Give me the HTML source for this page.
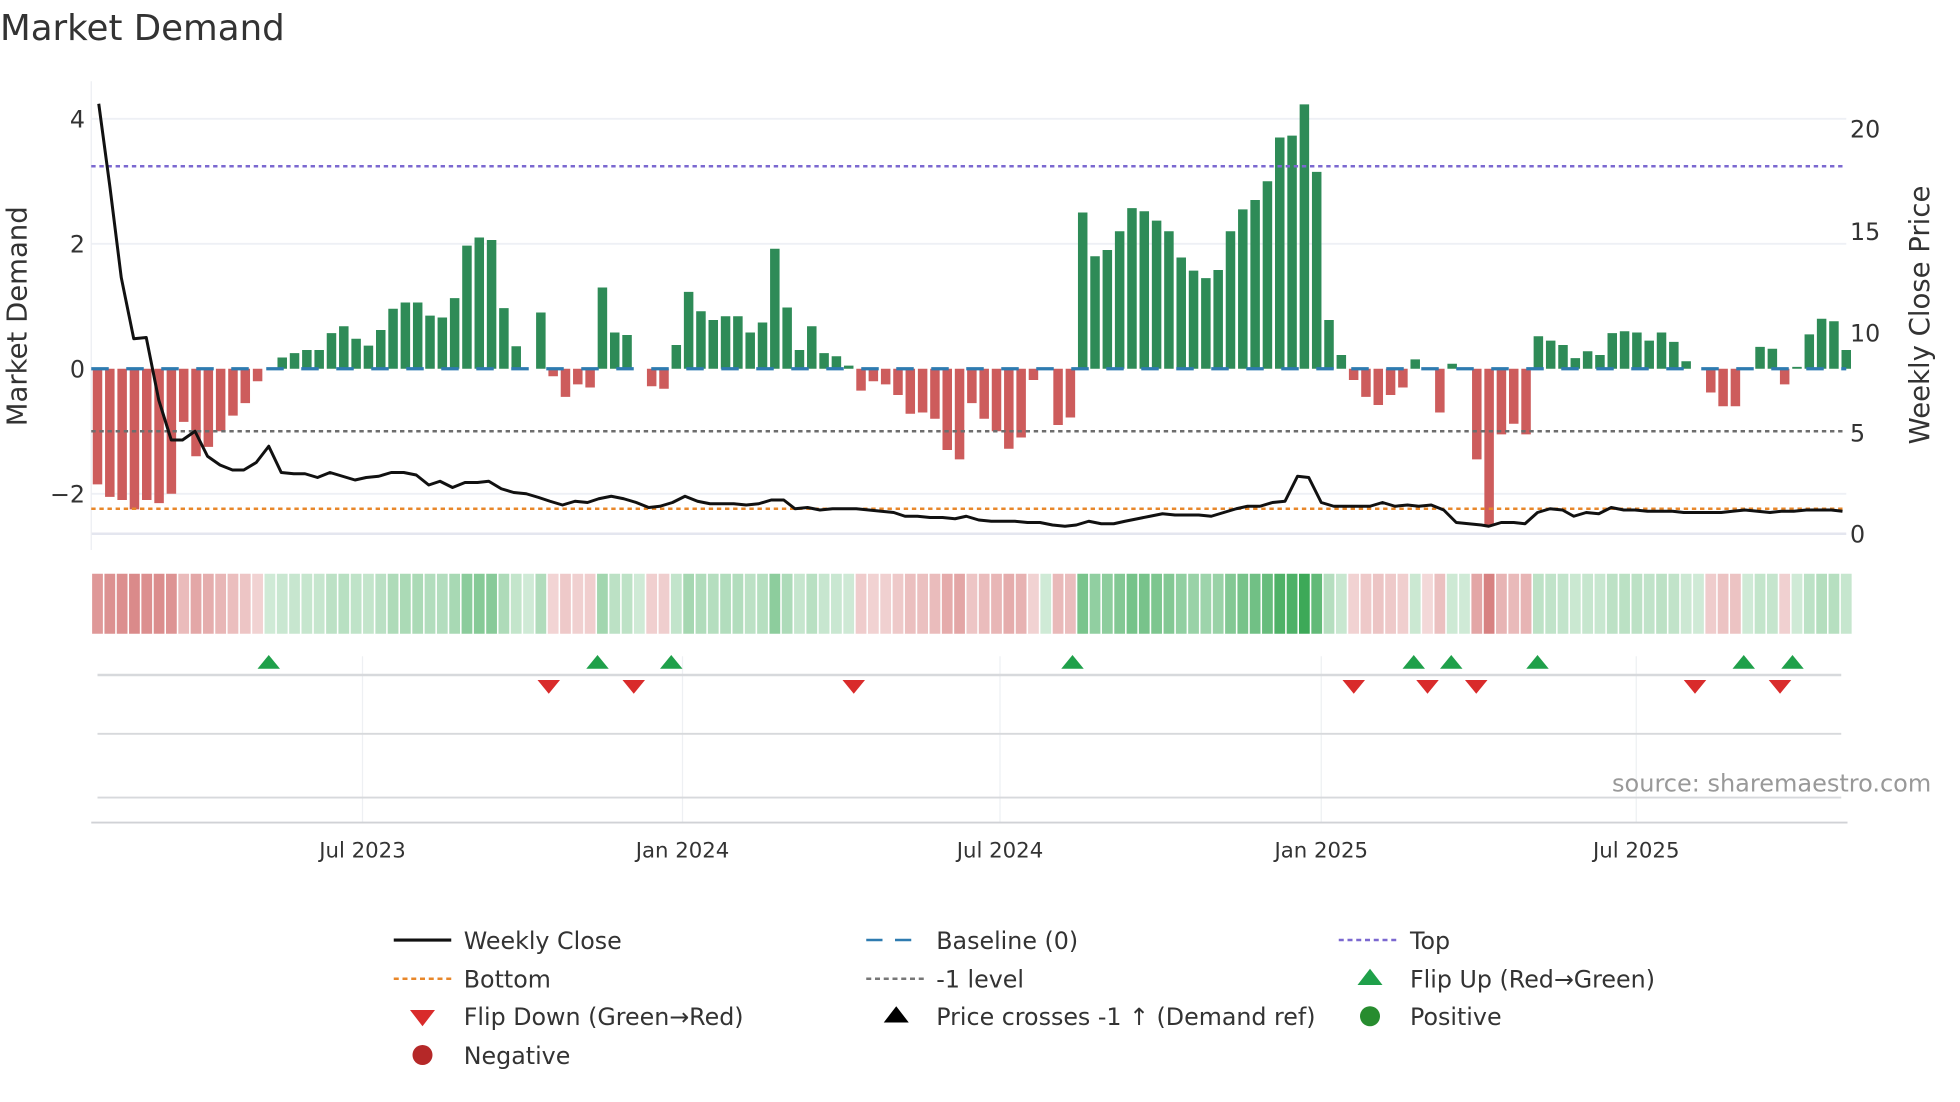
<!DOCTYPE html>
<html><head><meta charset="utf-8"><style>
html,body{margin:0;padding:0;background:#fff;width:1960px;height:1102px;overflow:hidden}
svg{display:block}
text{font-family:"DejaVu Sans","Liberation Sans",sans-serif;fill:#333}
</style></head><body>
<svg id="s" width="1960" height="1102" viewBox="0 0 1568 881.6" preserveAspectRatio="xMinYMin meet" xmlns="http://www.w3.org/2000/svg">
<text x="0" y="32" font-size="28.5">Market Demand</text>
<g stroke="#eef0f5" stroke-width="1.5">
<line x1="73" y1="95" x2="1477" y2="95"/><line x1="73" y1="195" x2="1477" y2="195"/>
<line x1="73" y1="395" x2="1477" y2="395"/><line x1="73" y1="427" x2="1477" y2="427" stroke="#e4e6ef" stroke-width="2"/>
</g>
<line x1="73" y1="65" x2="73" y2="440" stroke="#eceef2" stroke-width="1"/>
<g id="bars"></g>
<line x1="73" y1="295" x2="1477" y2="295" stroke="#2e7bb0" stroke-width="2.6" stroke-dasharray="14 14"/>
<line x1="73" y1="133" x2="1477" y2="133" stroke="#7b68d0" stroke-width="2" stroke-dasharray="3.5 3"/>
<line x1="73" y1="345" x2="1477" y2="345" stroke="#6d6d6d" stroke-width="2" stroke-dasharray="3.5 3"/>
<line x1="73" y1="407" x2="1477" y2="407" stroke="#e8872a" stroke-width="2" stroke-dasharray="3.5 3"/>
<polyline id="price" fill="none" stroke="#111" stroke-width="2.4" stroke-linejoin="round"/>
<g font-size="19" text-anchor="end">
<text x="68" y="102">4</text><text x="68" y="202">2</text><text x="68" y="302">0</text><text x="68" y="402">−2</text>
</g>
<g font-size="19">
<text x="1480" y="110">20</text><text x="1480" y="192">15</text><text x="1480" y="273">10</text><text x="1480" y="353">5</text><text x="1480" y="434">0</text>
</g>
<text transform="translate(21,253) rotate(-90)" font-size="22" text-anchor="middle">Market Demand</text>
<text transform="translate(1543,252) rotate(-90)" font-size="22" text-anchor="middle">Weekly Close Price</text>
<g id="strip"></g>
<g stroke="#eef0f3" stroke-width="1">
<line x1="290" y1="525" x2="290" y2="658"/><line x1="546" y1="525" x2="546" y2="658"/><line x1="800" y1="525" x2="800" y2="658"/><line x1="1057" y1="525" x2="1057" y2="658"/><line x1="1309" y1="525" x2="1309" y2="658"/>
</g>
<line x1="78" y1="540" x2="1473" y2="540" stroke="#d7d9dc" stroke-width="2"/>
<line x1="78" y1="587" x2="1473" y2="587" stroke="#d7d9dc" stroke-width="1.5"/>
<line x1="78" y1="638" x2="1473" y2="638" stroke="#d7d9dc" stroke-width="1.5"/>
<line x1="73" y1="658" x2="1478" y2="658" stroke="#d0d2d6" stroke-width="1.5"/>
<g id="marks"></g>
<g font-size="17" text-anchor="middle">
<text x="290" y="686">Jul 2023</text><text x="546" y="686">Jan 2024</text><text x="800" y="686">Jul 2024</text><text x="1057" y="686">Jan 2025</text><text x="1309" y="686">Jul 2025</text>
</g>
<text x="1545" y="633" font-size="19.2" text-anchor="end" style="fill:#999">source: sharemaestro.com</text>
<g font-size="19">
<line x1="315" y1="752" x2="361" y2="752" stroke="#111" stroke-width="2.5"/><text x="371" y="759">Weekly Close</text>
<line x1="693" y1="752" x2="739" y2="752" stroke="#2e7bb0" stroke-width="2" stroke-dasharray="13 10"/><text x="749" y="759">Baseline (0)</text>
<line x1="1071" y1="752" x2="1117" y2="752" stroke="#7b68d0" stroke-width="2" stroke-dasharray="4 3"/><text x="1128" y="759">Top</text>
<line x1="315" y1="783" x2="361" y2="783" stroke="#e8872a" stroke-width="2" stroke-dasharray="4 3"/><text x="371" y="790">Bottom</text>
<line x1="693" y1="783" x2="739" y2="783" stroke="#777" stroke-width="2" stroke-dasharray="4 3"/><text x="749" y="790">-1 level</text>
<polygon points="1096,775 1106,788 1086,788" fill="#1fa04a"/><text x="1128" y="790">Flip Up (Red→Green)</text>
<polygon points="328,808 348,808 338,821" fill="#d92b2b"/><text x="371" y="820">Flip Down (Green→Red)</text>
<polygon points="717,805 727,818 707,818" fill="#000"/><text x="749" y="820">Price crosses -1 ↑ (Demand ref)</text>
<circle cx="1096" cy="813" r="8" fill="#278c2f"/><text x="1128" y="820">Positive</text>
<circle cx="338" cy="844" r="8" fill="#b52828"/><text x="371" y="851">Negative</text>
</g>
</svg>
<script>
var NS="http://www.w3.org/2000/svg";
var v=[-1.85,-2.05,-2.1,-2.25,-2.1,-2.15,-2.0,-0.85,-1.4,-1.25,-1.0,-0.75,-0.55,-0.2,0.01,0.18,0.25,0.3,0.3,0.57,0.68,0.48,0.37,0.62,0.96,1.06,1.06,0.85,0.82,1.13,1.97,2.1,2.06,0.97,0.36,0.01,0.9,-0.12,-0.45,-0.25,-0.3,1.3,0.58,0.54,0.01,-0.28,-0.32,0.38,1.23,0.92,0.78,0.84,0.84,0.58,0.74,1.92,0.98,0.3,0.68,0.25,0.2,0.05,-0.35,-0.2,-0.25,-0.42,-0.72,-0.7,-0.8,-1.3,-1.45,-0.55,-0.8,-1.0,-1.28,-1.1,-0.18,0.01,-0.9,-0.78,
2.5,1.8,1.9,2.2,2.57,2.52,2.37,2.2,1.78,1.57,1.45,1.58,2.2,2.55,2.7,3.0,3.7,3.73,4.23,3.15,0.78,0.22,-0.18,-0.45,-0.58,-0.42,-0.3,0.15,-0.02,-0.7,0.08,0.02,-1.45,-2.5,-1.05,-0.88,-1.05,0.52,0.45,0.38,0.17,0.28,0.22,0.57,0.6,0.58,0.45,0.58,0.43,0.12,0.01,-0.38,-0.6,-0.6,0.01,0.35,0.32,-0.25,0.03,0.55,0.8,0.76,0.3];
var n=v.length,dx=(1477-78)/(n-1);
function el(t,a,p){var e=document.createElementNS(NS,t);for(var k in a)e.setAttribute(k,a[k]);p.appendChild(e);return e;}
var bars=document.getElementById('bars'),strip=document.getElementById('strip');
for(var i=0;i<n;i++){var x=78+dx*i,val=v[i],h=Math.abs(val)*50;
 if(h>0.6)el('rect',{x:x-3.8,y:val>0?295-h:295,width:7.6,height:h,fill:val>0?'#2e8b57':'#cd5c5c'},bars);
 var a,c;if(val<0){a=0.22+0.5*Math.min(-val/2.5,1);c='rgba(200,80,80,'+a+')';}else{a=0.22+0.68*Math.min(val/4.2,1);c='rgba(40,160,70,'+a+')';}
 el('rect',{x:x-4.3,y:459,width:8.6,height:48,fill:c},strip);}
var p=[79,83,88,150,97,222,107,271,117,270,127,320,137,352,146,352,156,345,166,365,176,372,186,376,195,376,205,370,215,357,225,378,235,379,244,379,254,382,264,378,274,381,284,384,293,382,303,381,313,378,323,378,333,380,343,388,352,385,362,390,372,386,382,386,391,385,401,391,411,394,421,395,431,398,440,401,450,404,460,401,470,402,479,399,489,397,499,399,509,402,519,406,528,405,538,402,548,397,558,401,568,403,577,403,587,403,597,404,607,403,617,400,627,400,636,407,646,406,656,408,666,407,675,407,685,407,695,408,705,409,715,410,724,413,734,413,744,414,754,414,764,415,773,413,783,416,793,417,803,417,812,417,822,418,832,418,842,420,852,421,861,420,871,417,881,419,891,419,900,417,910,415,920,413,930,411,940,412,949,412,959,412,969,413,979,410,989,407,998,405,1008,405,1018,402,1028,401,1038,381,1047,382,1057,402,1067,405,1077,405,1087,405,1096,405,1106,402,1116,405,1126,404,1135,405,1145,404,1155,408,1165,418,1175,419,1185,420,1191,421,1201,418,1211,418,1220,419,1230,410,1240,407,1250,408,1259,413,1269,410,1279,411,1289,406,1299,408,1308,408,1318,409,1328,409,1338,409,1347,410,1357,410,1367,410,1377,410,1386,409,1396,408,1406,409,1416,410,1425,409,1435,409,1445,408,1455,408,1465,408,1474,409];
var s='';for(var j=0;j<p.length;j+=2)s+=p[j]+','+p[j+1]+' ';document.getElementById('price').setAttribute('points',s);
var m=document.getElementById('marks');
[215,478,537,858,1131,1161,1230,1395,1434].forEach(function(x){el('polygon',{points:(x)+',524 '+(x+9)+',535 '+(x-9)+',535',fill:'#1fa04a'},m);});
[439,507,683,1083,1142,1181,1356,1424].forEach(function(x){el('polygon',{points:(x-9)+',544 '+(x+9)+',544 '+x+',555',fill:'#d92b2b'},m);});
</script>
</body></html>
